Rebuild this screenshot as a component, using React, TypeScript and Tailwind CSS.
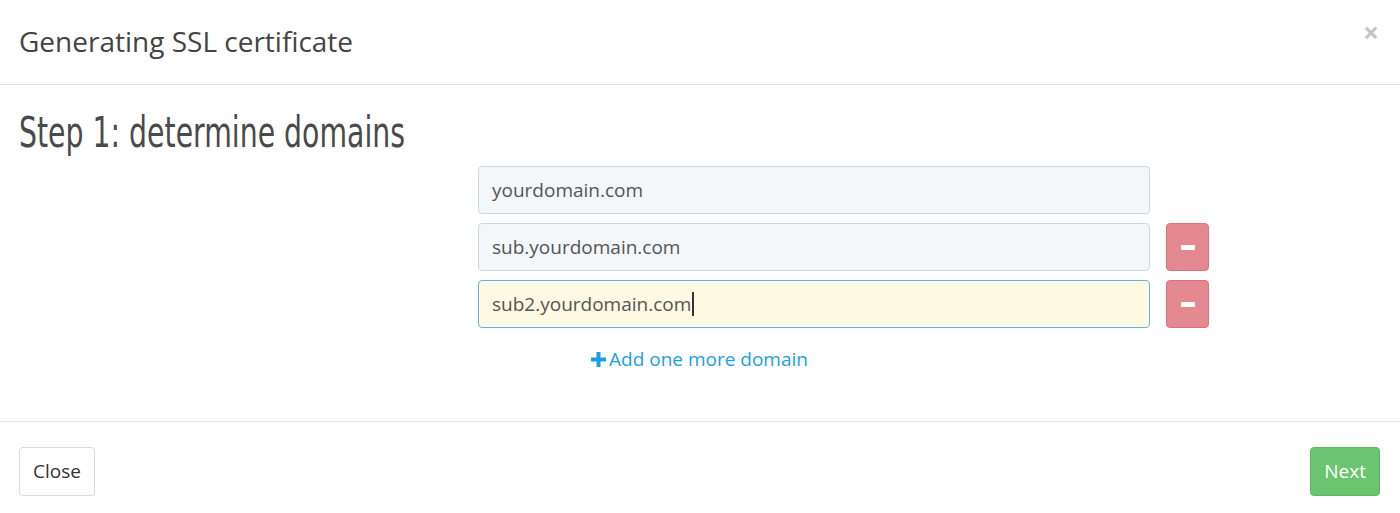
import React from "react";

const domains = [
  { value: "yourdomain.com", removable: false, active: false },
  { value: "sub.yourdomain.com", removable: true, active: false },
  { value: "sub2.yourdomain.com", removable: true, active: true },
];

const MinusButton = () => (
  <button className="w-[43px] h-[48px] rounded-[4px] bg-[#e3898f] border border-[#d9737b] flex items-center justify-center">
    <span className="block w-[14px] h-[5px] bg-white rounded-[1px]" />
  </button>
);

const App = () => {
  return (
    <div
      className="w-[1400px] h-[513px] bg-white flex flex-col text-[#555]"
      style={{ fontFamily: '"Open Sans", sans-serif' }}
    >
      {/* header */}
      <div className="h-[85px] border-b border-[#e5e5e5] flex items-center justify-between pl-[19px] pr-[21px]">
        <h4 className="text-[28px] text-[#444] leading-none -mt-[3px]">Generating SSL certificate</h4>
        <button className="text-[#c4c4c4] text-[28px] font-bold leading-none -mt-[21px]">×</button>
      </div>

      {/* body */}
      <div className="flex-1 border-b border-[#e5e5e5] pl-[19px] pt-[27px]">
        <h3
          className="text-[42px] leading-none text-[#4a4a4a] origin-left scale-x-[0.75] whitespace-nowrap"
          style={{ fontFamily: '"DejaVu Sans Condensed", "DejaVu Sans", sans-serif' }}
        >
          Step 1: determine domains
        </h3>
        <div className="ml-[459px] mt-[12px] flex flex-col gap-[9px]">
          {domains.map((d) => (
            <div key={d.value} className="flex items-center gap-[16px]">
              <div
                className={
                  d.active
                    ? "w-[672px] h-[48px] rounded-[4px] border border-[#66aee6] bg-[#fef9e3] px-[13px] flex items-center text-[19px] text-[#555]"
                    : "w-[672px] h-[48px] rounded-[4px] border border-[#c8dadd] bg-[#f3f7f9] px-[13px] flex items-center text-[19px] text-[#555]"
                }
              >
                {d.value}
                {d.active && <span className="inline-block w-[1.5px] h-[24px] bg-[#333] ml-[1px]" />}
              </div>
              {d.removable && <MinusButton />}
            </div>
          ))}
          <div className="pl-[113px] mt-[8px] flex items-center gap-[3px] text-[#1ba1e2] text-[19px]">
            <svg width="15" height="15" viewBox="0 0 15 15">
              <rect x="5.5" y="0" width="4" height="15" fill="#1ba1e2" />
              <rect x="0" y="5.5" width="15" height="4" fill="#1ba1e2" />
            </svg>
            <span>Add one more domain</span>
          </div>
        </div>
      </div>

      {/* footer */}
      <div className="h-[91px] flex items-center justify-between pl-[19px] pr-[20px] pt-[8px]">
        <button className="h-[49px] px-[13px] rounded-[4px] border border-[#d9d9d9] text-[19px] text-[#333] bg-white">
          Close
        </button>
        <button className="h-[49px] px-[13px] rounded-[4px] border border-[#5cb85c] bg-[#6bc46f] text-[19px] text-white">
          Next
        </button>
      </div>
    </div>
  );
};

export default App;
